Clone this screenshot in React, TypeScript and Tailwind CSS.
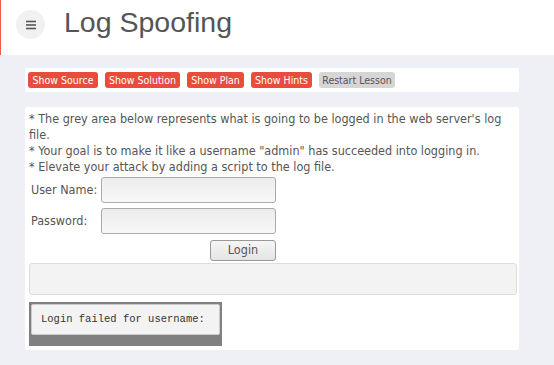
const btn = 'rounded-[3px] h-[16px] leading-[16px] text-[10.5px] text-center whitespace-nowrap'

const MenuIcon = () => (
  <svg width="12" height="10" viewBox="0 0 12 10" fill="none" stroke="#555" strokeWidth="1.6">
    <line x1="1" y1="1.5" x2="11" y2="1.5" />
    <line x1="1" y1="5" x2="11" y2="5" />
    <line x1="1" y1="8.5" x2="11" y2="8.5" />
  </svg>
)

export default function App() {
  return (
    <div className="w-[554px] h-[365px] bg-[#eff0f5] text-[#555] font-['DejaVu_Sans',sans-serif] font-stretch-condensed overflow-hidden">
      <header className="h-[55px] bg-white border-l border-[#f05a48] flex items-start">
        <div className="ml-[15px] mt-[10px] w-[29px] h-[29px] rounded-full bg-[#f1f1f1] flex items-center justify-center">
          <MenuIcon />
        </div>
        <h1 className="ml-[19px] mt-[4px] text-[28.5px] leading-[36px] text-[#555] font-['Liberation_Sans',sans-serif] font-stretch-normal">
          Log Spoofing
        </h1>
      </header>

      <div className="px-[25px] pt-[13px]">
        <div className="w-[494px] h-[24px] bg-white rounded-[2px] flex items-center gap-[7px] pl-[3px] pb-[1px]">
          <button className={`${btn} w-[70px] bg-[#e74c3c] text-white`}>Show Source</button>
          <button className={`${btn} w-[75px] bg-[#e74c3c] text-white`}>Show Solution</button>
          <button className={`${btn} w-[57px] bg-[#e74c3c] text-white`}>Show Plan</button>
          <button className={`${btn} w-[61px] bg-[#e74c3c] text-white`}>Show Hints</button>
          <button className={`${btn} w-[76px] bg-[#d6d6d6] text-[#555]`}>Restart Lesson</button>
        </div>

        <section className="mt-[15px] w-[494px] h-[243px] bg-white rounded-[2px] pl-[4px] pr-[4px] pt-[4px]">
          <p className="text-[12.5px] leading-[16px]">
            * The grey area below represents what is going to be logged in the web server's log file.
            <br />* Your goal is to make it like a username "admin" has succeeded into logging in.
            <br />* Elevate your attack by adding a script to the log file.
          </p>
          <div className="mt-[2px] flex flex-col gap-[5px]">
            <div className="flex items-center h-[26px]">
              <label className="w-[72px] pl-[2px] text-[12.5px] whitespace-nowrap">User Name:</label>
              <input className="w-[175px] h-[26px] border border-[#aaa] rounded-[3px] bg-gradient-to-b from-[#ececec] to-[#f8f8f8]" />
            </div>
            <div className="flex items-center h-[26px]">
              <label className="w-[72px] pl-[2px] text-[12.5px] whitespace-nowrap">Password:</label>
              <input type="password" className="w-[175px] h-[26px] border border-[#aaa] rounded-[3px] bg-gradient-to-b from-[#ececec] to-[#f8f8f8]" />
            </div>
          </div>
          <div className="mt-[6px] flex justify-start pl-[181px]">
            <button className="w-[66px] h-[21px] border border-[#999] rounded-[3px] bg-gradient-to-b from-[#f6f6f6] to-[#e4e4e4] text-[12.5px] text-[#555]">
              Login
            </button>
          </div>
          <div className="mt-[2px] w-[488px] h-[32px] bg-[#f3f3f3] border border-[#ddd] rounded-[3px]" />
          <div className="mt-[7px] w-[193px] h-[44px] bg-[#808080] pt-[2px] pl-[2px] pr-[2px]">
            <div className="h-[31px] bg-[#f3f3f3] border border-[#ccc] rounded-[2px] flex items-center pl-[9px] font-['Liberation_Mono',monospace] text-[10.5px] text-[#333]">
              Login failed for username:
            </div>
          </div>
        </section>
      </div>
    </div>
  )
}
